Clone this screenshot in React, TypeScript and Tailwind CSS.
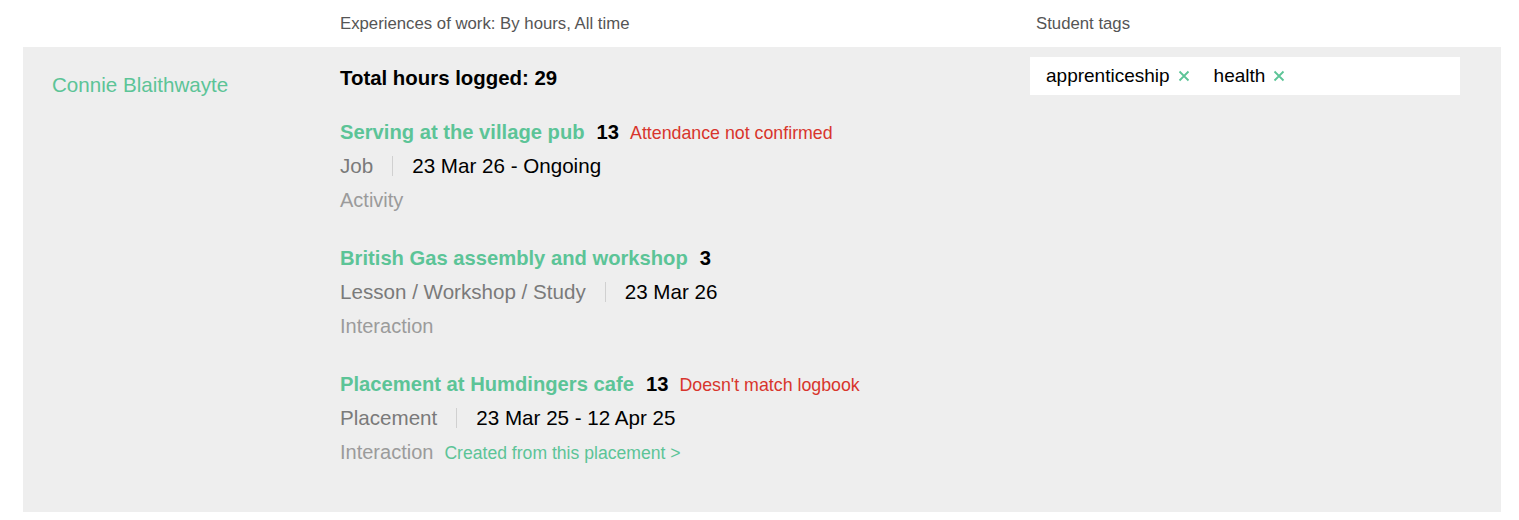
import React from "react";

type Experience = {
  title: string;
  hours: number;
  warning?: string;
  kind: string;
  dates: string;
  source: string;
  link?: string;
};

const experiences: Experience[] = [
  {
    title: "Serving at the village pub",
    hours: 13,
    warning: "Attendance not confirmed",
    kind: "Job",
    dates: "23 Mar 26 - Ongoing",
    source: "Activity",
  },
  {
    title: "British Gas assembly and workshop",
    hours: 3,
    kind: "Lesson / Workshop / Study",
    dates: "23 Mar 26",
    source: "Interaction",
  },
  {
    title: "Placement at Humdingers cafe",
    hours: 13,
    warning: "Doesn't match logbook",
    kind: "Placement",
    dates: "23 Mar 25 - 12 Apr 25",
    source: "Interaction",
    link: "Created from this placement >",
  },
];

const tags = ["apprenticeship", "health"];

const ExperienceItem: React.FC<{ exp: Experience }> = ({ exp }) => (
  <div className="flex flex-col">
    <div className="flex items-baseline h-[33px] leading-[33px]">
      <span className="text-[20.2px] font-bold text-[#5cc497]">{exp.title}</span>
      <span className="text-[20.2px] font-bold text-black ml-[12px]">{exp.hours}</span>
      {exp.warning && (
        <span className="text-[17.8px] text-[#d8352c] ml-[11px]">{exp.warning}</span>
      )}
    </div>
    <div className="flex items-center h-[34px] text-[20.6px]">
      <span className="text-[#7a7a7a]">{exp.kind}</span>
      <span className="mx-[19px] w-px h-[20px] bg-[#d0d0d0]" />
      <span className="text-black">{exp.dates}</span>
    </div>
    <div className="flex items-baseline h-[34px] leading-[34px]">
      <span className="text-[20px] text-[#9b9b9b]">{exp.source}</span>
      {exp.link && (
        <span className="text-[17.6px] text-[#5cc497] ml-[11px]">{exp.link}</span>
      )}
    </div>
  </div>
);

export default function App() {
  return (
    <div className="w-[1519px] h-[520px] bg-white font-['Liberation_Sans',Arial,sans-serif]">
      <div className="flex h-[47px] items-center pl-[340px] text-[16.75px] text-[#555]">
        <span className="w-[696px]">Experiences of work: By hours, All time</span>
        <span>Student tags</span>
      </div>
      <div className="ml-[23px] w-[1478px] h-[465px] bg-[#eeeeee] flex">
        <div className="w-[317px] pl-[29px] pt-[21px]">
          <div className="h-[34px] leading-[34px] text-[20.6px] text-[#5cc497]">Connie Blaithwayte</div>
        </div>
        <div className="w-[690px] pt-[14px]">
          <div className="h-[34px] leading-[34px] text-[20.4px] font-bold text-black">Total hours logged: 29</div>
          <div className="flex flex-col gap-[25px] mt-[21px]">
            {experiences.map((exp, i) => (
              <ExperienceItem key={i} exp={exp} />
            ))}
          </div>
        </div>
        <div className="pt-[10px]">
          <div className="w-[430px] h-[38px] bg-white flex items-center pl-[16px] gap-[24px]">
            {tags.map((t) => (
              <span key={t} className="flex items-center text-[19px] text-black">
                {t}
                <span className="ml-[8px] text-[#5cc497]">
                  <svg width="12" height="12" viewBox="0 0 12 12">
                    <path d="M1.5 1.5 L10.5 10.5 M10.5 1.5 L1.5 10.5" stroke="currentColor" strokeWidth="1.8" />
                  </svg>
                </span>
              </span>
            ))}
          </div>
        </div>
      </div>
    </div>
  );
}
